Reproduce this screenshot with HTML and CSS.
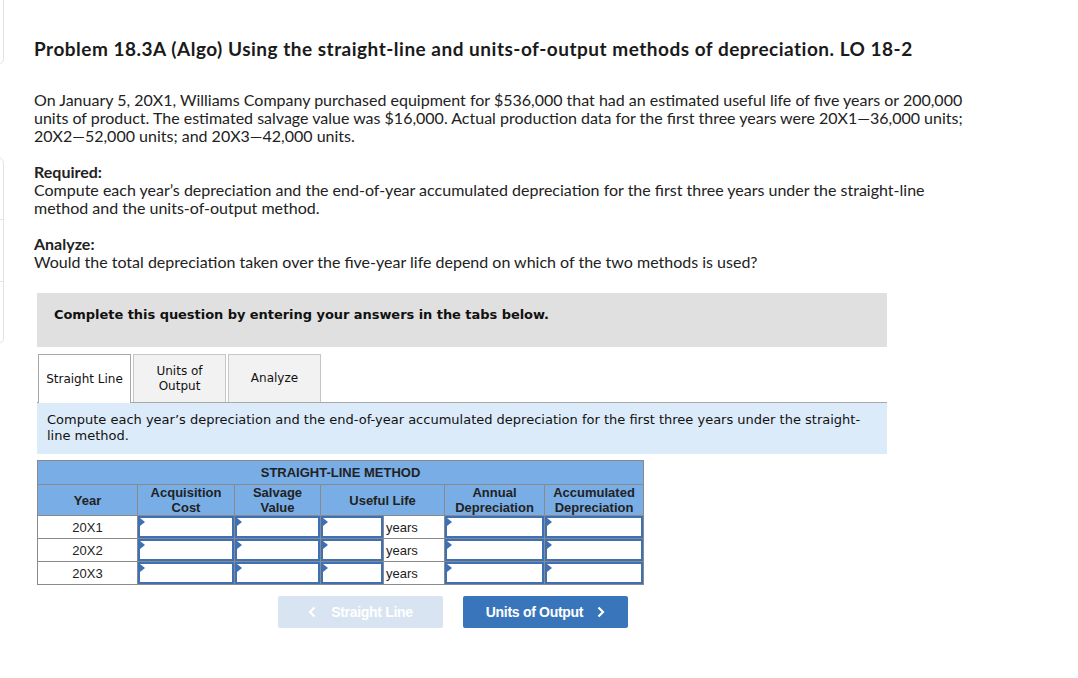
FILE: index.html
```html
<!DOCTYPE html>
<html>
<head>
<meta charset="utf-8">
<link rel="stylesheet" href="styles.css">
</head>
<body>
<div class="side">
  <div class="side-card side-top"></div>
  <div class="side-card side-list">
    <div class="side-item"></div>
    <div class="side-item"></div>
    <div class="side-item"></div>
  </div>
</div>
<main class="page">
  <h1 class="title">Problem 18.3A (Algo) Using the straight-line and units-of-output methods of depreciation. LO 18-2</h1>
  <p class="text intro">On January 5, 20X1, Williams Company purchased equipment for $536,000 that had an estimated useful life of five years or 200,000 units of product. The estimated salvage value was $16,000. Actual production data for the first three years were 20X1—36,000 units; 20X2—52,000 units; and 20X3—42,000 units.</p>
  <p class="text"><b>Required:</b><br>Compute each year’s depreciation and the end-of-year accumulated depreciation for the first three years under the straight-line method and the units-of-output method.</p>
  <p class="text"><b>Analyze:</b><br>Would the total depreciation taken over the five-year life depend on which of the two methods is used?</p>

  <div class="question">
    <div class="banner">Complete this question by entering your answers in the tabs below.</div>
    <div class="tabs">
      <div class="tab active">Straight Line</div>
      <div class="tab">Units of<br>Output</div>
      <div class="tab">Analyze</div>
    </div>
    <div class="instruction">Compute each year’s depreciation and the end-of-year accumulated depreciation for the first three years under the straight-line method.</div>

    <table class="grid">
      <colgroup>
        <col class="c-year"><col class="c-acq"><col class="c-salv"><col class="c-life"><col class="c-years"><col class="c-ann"><col class="c-acc">
      </colgroup>
      <thead>
        <tr class="h1"><th colspan="7">STRAIGHT-LINE METHOD</th></tr>
        <tr class="h2">
          <th>Year</th>
          <th>Acquisition<br>Cost</th>
          <th>Salvage<br>Value</th>
          <th colspan="2">Useful Life</th>
          <th>Annual<br>Depreciation</th>
          <th>Accumulated<br>Depreciation</th>
        </tr>
      </thead>
      <tbody>
        <tr>
          <td class="yr">20X1</td>
          <td class="in"><div class="box"></div></td>
          <td class="in"><div class="box"></div></td>
          <td class="in"><div class="box"></div></td>
          <td class="unit">years</td>
          <td class="in"><div class="box"></div></td>
          <td class="in"><div class="box"></div></td>
        </tr>
        <tr>
          <td class="yr">20X2</td>
          <td class="in"><div class="box"></div></td>
          <td class="in"><div class="box"></div></td>
          <td class="in"><div class="box"></div></td>
          <td class="unit">years</td>
          <td class="in"><div class="box"></div></td>
          <td class="in"><div class="box"></div></td>
        </tr>
        <tr>
          <td class="yr">20X3</td>
          <td class="in"><div class="box"></div></td>
          <td class="in"><div class="box"></div></td>
          <td class="in"><div class="box"></div></td>
          <td class="unit">years</td>
          <td class="in"><div class="box"></div></td>
          <td class="in"><div class="box"></div></td>
        </tr>
      </tbody>
    </table>

    <div class="nav">
      <div class="btn prev"><svg class="chev left" width="8" height="12" viewBox="0 0 8 12"><path d="M6.5 1.5 L2 6 L6.5 10.5" fill="none" stroke="#fff" stroke-width="2.2"/></svg>Straight Line</div>
      <div class="btn next">Units of Output<svg class="chev right" width="8" height="12" viewBox="0 0 8 12"><path d="M1.5 1.5 L6 6 L1.5 10.5" fill="none" stroke="#fff" stroke-width="2.2"/></svg></div>
    </div>
  </div>
</main>
</body>
</html>
```

FILE: styles.css
```css
html, body {
  margin: 0;
  padding: 0;
  background: #ffffff;
}
body {
  font-family: "Lato", "Liberation Sans", sans-serif;
  color: #1a1a1a;
}
.side {
  position: absolute;
  left: -196px;
  top: -10px;
  width: 200px;
}
.side-card {
  border: 1px solid #e3e3e3;
  border-radius: 6px;
  background: #fff;
  box-sizing: border-box;
}
.side-top {
  height: 75px;
}
.side-list {
  margin-top: 92px;
}
.side-item {
  height: 61px;
  border-top: 1px solid #e3e3e3;
}
.side-item:first-child {
  border-top: none;
}
.page {
  padding: 37px 0 0 34px;
  width: 932px;
}
.title {
  margin: 0 0 30px 0;
  font-size: 19px;
  line-height: 24px;
  font-weight: 700;
  letter-spacing: 0.5px;
  color: #1a1a1a;
  white-space: nowrap;
}
.text {
  margin: 0 0 18px 0;
  font-size: 16px;
  line-height: 18px;
  color: #222;
}
.text b {
  font-weight: 700;
}
.question {
  margin-left: 3px;
  width: 850px;
  margin-top: 22px;
}
.banner {
  background: #e0e0e0;
  height: 54px;
  box-sizing: border-box;
  padding: 14px 0 0 17px;
  font-family: "DejaVu Sans", Verdana, sans-serif;
  font-weight: 700;
  font-size: 13px;
  line-height: 16px;
  letter-spacing: -0.05px;
  color: #111;
}
.tabs {
  display: flex;
  gap: 2px;
  margin-top: 7px;
  padding-left: 1px;
  border-bottom: 1px solid #a8a8a8;
  height: 48px;
}
.tab {
  width: 93px;
  box-sizing: border-box;
  border: 1px solid #c6c6c6;
  border-bottom: none;
  background: #f2f2f2;
  display: flex;
  align-items: center;
  justify-content: center;
  text-align: center;
  font-family: "DejaVu Sans", Verdana, sans-serif;
  font-size: 12px;
  line-height: 15px;
  color: #111;
}
.tab.active {
  background: #fff;
  border-color: #a8a8a8;
  height: 49px;
  position: relative;
  z-index: 1;
}
.instruction {
  background: #dcebf9;
  height: 51px;
  box-sizing: border-box;
  padding: 9px 10px 0 10px;
  font-family: "DejaVu Sans", Verdana, sans-serif;
  font-size: 13px;
  line-height: 16px;
  color: #111;
}
.grid {
  margin-top: 6px;
  border-collapse: collapse;
  table-layout: fixed;
  width: 606px;
  font-family: "Liberation Sans", Arial, sans-serif;
  font-size: 13px;
  color: #222;
}
.c-year { width: 100px; }
.c-acq { width: 97px; }
.c-salv { width: 86px; }
.c-life { width: 63px; }
.c-years { width: 61px; }
.c-ann { width: 100px; }
.c-acc { width: 99px; }
.grid th {
  background: #78ade6;
  border: 1px solid #8a8a8a;
  font-weight: 700;
  line-height: 15px;
  padding: 0;
  color: #222;
}
.grid .h1 th {
  height: 23px;
  font-size: 13px;
}
.grid .h2 th {
  height: 30px;
}
.grid td {
  border: 1px solid #8a8a8a;
  height: 22px;
  padding: 0;
  background: #fff;
}
.grid td.yr {
  text-align: center;
}
.grid td.unit {
  text-align: left;
  padding-left: 2px;
}
.grid td.in {
  position: relative;
}
.box {
  position: absolute;
  left: 0;
  top: 0;
  right: 0;
  bottom: 0;
  border: 2px solid #3d70b4;
  background: #fff;
}
.box::before {
  content: "";
  position: absolute;
  left: 0;
  top: 0;
  border-top: 4px solid transparent;
  border-bottom: 4px solid transparent;
  border-left: 5px solid #3d70b4;
}
.nav {
  display: flex;
  gap: 20px;
  margin-top: 11px;
  margin-left: 241px;
}
.btn {
  width: 165px;
  height: 32px;
  border-radius: 2px;
  display: flex;
  align-items: center;
  justify-content: center;
  font-family: "Liberation Sans", Arial, sans-serif;
  font-weight: 700;
  font-size: 14px;
  color: #fff;
  letter-spacing: -0.3px;
}
.btn.prev {
  background: #d9e4f2;
}
.btn.next {
  background: #3975ba;
}
.chev {
  display: block;
}
.chev.left {
  margin-right: 15px;
}
.chev.right {
  margin-left: 14px;
}
```
